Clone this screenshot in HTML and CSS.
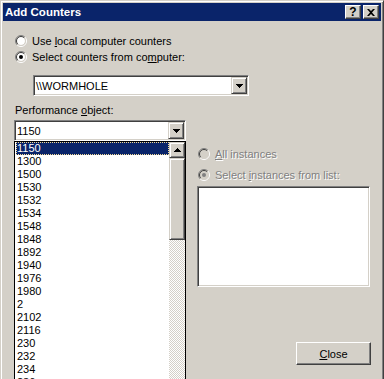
FILE: index.html
```html
<!DOCTYPE html>
<html lang="en">
  <head>
    <meta charset="UTF-8" />
    <title>Add Counters</title>
    <link rel="stylesheet" href="styles.css">
  </head>
  <body>
    <div class="window">
      <div class="titlebar">
        <span class="title">Add Counters</span>
        <div class="caption-buttons">
          <span class="cap-btn cap-help">?</span>
          <span class="cap-btn">
            <svg width="8" height="7" viewBox="0 0 8 7">
              <path d="M0 0h2l2 2 2-2h2L5 3.5 8 7H6L4 5 2 7H0l3-3.5z" fill="#000"/>
            </svg>
          </span>
        </div>
      </div>

      <div class="client">
        <div class="radio-row">
          <svg class="radio" width="12" height="12" viewBox="0 0 12 12">
            <circle cx="6" cy="6" r="4" fill="#fff"/>
            <path d="M2.1 9.9A5.5 5.5 0 0 1 9.9 2.1" fill="none" stroke="#808080"/>
            <path d="M9.9 2.1A5.5 5.5 0 0 1 2.1 9.9" fill="none" stroke="#fff"/>
            <path d="M2.8 9.2A4.5 4.5 0 0 1 9.2 2.8" fill="none" stroke="#404040"/>
            <path d="M9.2 2.8A4.5 4.5 0 0 1 2.8 9.2" fill="none" stroke="#d4d0c8"/>
          </svg>
          <span>Use <u>l</u>ocal computer counters</span>
        </div>
        <div class="radio-row">
          <svg class="radio" width="12" height="12" viewBox="0 0 12 12">
            <circle cx="6" cy="6" r="4" fill="#fff"/>
            <path d="M2.1 9.9A5.5 5.5 0 0 1 9.9 2.1" fill="none" stroke="#808080"/>
            <path d="M9.9 2.1A5.5 5.5 0 0 1 2.1 9.9" fill="none" stroke="#fff"/>
            <path d="M2.8 9.2A4.5 4.5 0 0 1 9.2 2.8" fill="none" stroke="#404040"/>
            <path d="M9.2 2.8A4.5 4.5 0 0 1 2.8 9.2" fill="none" stroke="#d4d0c8"/>
            <circle cx="6" cy="6" r="2" fill="#000"/>
          </svg>
          <span>Select counters from co<u>m</u>puter:</span>
        </div>

        <div class="combo combo-machine">
          <span class="combo-text">\\WORMHOLE</span>
          <span class="drop-btn">
            <svg width="7" height="4" viewBox="0 0 7 4"><path d="M0 0h7v1H0zM1 1h5v1H1zM2 2h3v1H2zM3 3h1v1H3z" fill="#000"/></svg>
          </span>
        </div>

        <div class="panes">
          <div class="object-pane">
            <div class="field-label">Performance <u>o</u>bject:</div>
            <div class="combo combo-object">
              <span class="combo-text">1150</span>
              <span class="drop-btn">
                <svg width="7" height="4" viewBox="0 0 7 4"><path d="M0 0h7v1H0zM1 1h5v1H1zM2 2h3v1H2zM3 3h1v1H3z" fill="#000"/></svg>
              </span>
            </div>
            <div class="droplist">
              <ul class="items">
                <li class="selected">1150</li>
                <li>1300</li>
                <li>1500</li>
                <li>1530</li>
                <li>1532</li>
                <li>1534</li>
                <li>1548</li>
                <li>1848</li>
                <li>1892</li>
                <li>1940</li>
                <li>1976</li>
                <li>1980</li>
                <li>2</li>
                <li>2102</li>
                <li>2116</li>
                <li>230</li>
                <li>232</li>
                <li>234</li>
                <li>236</li>
              </ul>
              <div class="scrollbar">
                <span class="sb-btn">
                  <svg width="7" height="4" viewBox="0 0 7 4"><path d="M3 0h1v1H3zM2 1h3v1H2zM1 2h5v1H1zM0 3h7v1H0z" fill="#000"/></svg>
                </span>
                <span class="sb-thumb"></span>
                <span class="sb-track"></span>
              </div>
            </div>
          </div>

          <div class="instance-pane">
            <div class="radio-row disabled">
              <svg class="radio" width="12" height="12" viewBox="0 0 12 12">
                <circle cx="6" cy="6" r="4" fill="#d4d0c8"/>
                <path d="M2.1 9.9A5.5 5.5 0 0 1 9.9 2.1" fill="none" stroke="#808080"/>
                <path d="M9.9 2.1A5.5 5.5 0 0 1 2.1 9.9" fill="none" stroke="#fff"/>
                <path d="M2.8 9.2A4.5 4.5 0 0 1 9.2 2.8" fill="none" stroke="#404040"/>
                <path d="M9.2 2.8A4.5 4.5 0 0 1 2.8 9.2" fill="none" stroke="#d4d0c8"/>
              </svg>
              <span><u>A</u>ll instances</span>
            </div>
            <div class="radio-row disabled">
              <svg class="radio" width="12" height="12" viewBox="0 0 12 12">
                <circle cx="6" cy="6" r="4" fill="#d4d0c8"/>
                <path d="M2.1 9.9A5.5 5.5 0 0 1 9.9 2.1" fill="none" stroke="#808080"/>
                <path d="M9.9 2.1A5.5 5.5 0 0 1 2.1 9.9" fill="none" stroke="#fff"/>
                <path d="M2.8 9.2A4.5 4.5 0 0 1 9.2 2.8" fill="none" stroke="#404040"/>
                <path d="M9.2 2.8A4.5 4.5 0 0 1 2.8 9.2" fill="none" stroke="#d4d0c8"/>
                <circle cx="6" cy="6" r="2" fill="#808080"/>
              </svg>
              <span>Select <u>i</u>nstances from list:</span>
            </div>
            <div class="instance-list"></div>
            <span class="push-btn"><u>C</u>lose</span>
          </div>
        </div>
      </div>
    </div>
  </body>
</html>
```

FILE: styles.css
```css
/* Reset */
* {
  margin: 0;
  padding: 0;
  box-sizing: border-box;
}
body {
  font-family: "Liberation Sans", Arial, sans-serif;
  font-size: 11px;
  color: #000;
  background: #d4d0c8;
  overflow: hidden;
}
u {
  text-decoration: underline;
  text-underline-offset: 1px;
}
.window {
  width: 384px;
  height: 420px;
  background: #d4d0c8;
  border: 1px solid;
  border-color: #d4d0c8 #404040 #404040 #d4d0c8;
  box-shadow: inset 1px 1px #fff, inset -1px -1px #808080;
  padding: 2px;
}
.titlebar {
  height: 18px;
  background: #0a246a;
  color: #fff;
  display: flex;
  align-items: center;
  justify-content: space-between;
  padding: 0 2px;
}
.title {
  font-weight: bold;
  font-size: 11.5px;
}
.caption-buttons {
  display: flex;
  gap: 2px;
}
.cap-btn {
  width: 16px;
  height: 14px;
  background: #d4d0c8;
  border: 1px solid;
  border-color: #fff #404040 #404040 #fff;
  box-shadow: inset -1px -1px #808080;
  display: flex;
  align-items: center;
  justify-content: center;
  color: #000;
}
.cap-help {
  font-weight: bold;
  font-size: 12px;
  line-height: 1;
}
.client {
  padding: 12px 0 0 11px;
}
.radio-row {
  height: 16px;
  display: flex;
  align-items: center;
  gap: 5px;
  padding-left: 1px;
  white-space: nowrap;
}
.radio {
  flex: none;
}
.radio-row.disabled {
  color: #808080;
  text-shadow: 1px 1px 0 #fff;
}
/* sunken combo boxes */
.combo {
  height: 21px;
  background: #fff;
  border: 1px solid;
  border-color: #808080 #fff #fff #808080;
  box-shadow: inset 1px 1px #404040, inset -1px -1px #d4d0c8;
  display: flex;
  align-items: center;
  padding: 1px;
}
.combo-text {
  flex: 1;
  padding-left: 1px;
}
.combo-machine {
  width: 216px;
  margin: 10px 0 0 19px;
}
.drop-btn,
.sb-btn {
  width: 16px;
  height: 17px;
  flex: none;
  background: #d4d0c8;
  border: 1px solid;
  border-color: #d4d0c8 #404040 #404040 #d4d0c8;
  box-shadow: inset 1px 1px #fff, inset -1px -1px #808080;
  display: flex;
  align-items: center;
  justify-content: center;
}
.drop-btn svg,
.sb-btn svg {
  display: block;
}
.panes {
  display: grid;
  grid-template-columns: 172px 174px;
  column-gap: 11px;
  margin-top: 7px;
}
.field-label {
  height: 14px;
  line-height: 14px;
  padding-left: 1px;
}
.combo-object {
  margin-top: 3px;
}
.droplist {
  height: 260px;
  background: #fff;
  border: 1px solid #000;
  display: flex;
}
.items {
  flex: 1;
  list-style: none;
  overflow: hidden;
}
.items li {
  height: 13px;
  line-height: 11px;
  margin-left: 1px;
  border: 1px solid transparent;
}
.items li.selected {
  background: #0a246a;
  color: #fff;
  border: 1px dotted #f5db95;
}
.scrollbar {
  width: 16px;
  display: flex;
  flex-direction: column;
}
.sb-btn {
  height: 16px;
}
.sb-thumb {
  height: 82px;
  background: #d4d0c8;
  border: 1px solid;
  border-color: #d4d0c8 #404040 #404040 #d4d0c8;
  box-shadow: inset 1px 1px #fff, inset -1px -1px #808080;
}
.sb-track {
  flex: 1;
  background: repeating-conic-gradient(#d4d0c8 0 25%, #fff 0 50%) 0 0 / 2px 2px;
}
.instance-pane {
  display: flex;
  flex-direction: column;
  padding-top: 43px;
}
.instance-pane .radio-row + .radio-row {
  margin-top: 5px;
}
.instance-list {
  width: 173px;
  height: 101px;
  margin-top: 3px;
  background: #fff;
  border: 1px solid;
  border-color: #808080 #fff #fff #808080;
  box-shadow: inset 1px 1px #404040, inset -1px -1px #d4d0c8;
}
.push-btn {
  align-self: flex-end;
  width: 75px;
  height: 23px;
  margin-top: 55px;
  background: #d4d0c8;
  border: 1px solid;
  border-color: #fff #404040 #404040 #fff;
  box-shadow: inset -1px -1px #808080;
  display: flex;
  align-items: center;
  justify-content: center;
}
```
